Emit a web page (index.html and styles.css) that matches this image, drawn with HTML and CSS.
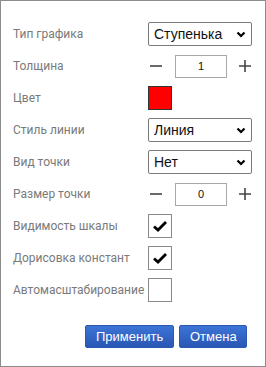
FILE: index.html
```html
<!DOCTYPE html>
<html lang="ru">
<head>
    <meta charset="UTF-8">
    <title>Настройки графика</title>
    <link rel="stylesheet" href="styles.css">
</head>
<body>
    <div class="panel">
        <div class="form-grid">
            <label class="field-label">Тип графика</label>
            <div class="select-wrap">
                <select class="select"><option>Ступенька</option></select>
                <svg class="chevron" width="10" height="7" viewBox="0 0 10 7"><path d="M1.5 1.5 L5 5 L8.5 1.5" fill="none" stroke="#000" stroke-width="2.2"/></svg>
            </div>

            <label class="field-label">Толщина</label>
            <div class="stepper">
                <span class="step-btn">
                    <svg width="14" height="14" viewBox="0 0 14 14"><path d="M1 7 H13" stroke="#444" stroke-width="1.6"/></svg>
                </span>
                <input class="step-value" type="text" value="1">
                <span class="step-btn">
                    <svg width="14" height="14" viewBox="0 0 14 14"><path d="M1 7 H13 M7 1 V13" stroke="#444" stroke-width="1.6"/></svg>
                </span>
            </div>

            <label class="field-label">Цвет</label>
            <div class="color-box"></div>

            <label class="field-label">Стиль линии</label>
            <div class="select-wrap">
                <select class="select"><option>Линия</option></select>
                <svg class="chevron" width="10" height="7" viewBox="0 0 10 7"><path d="M1.5 1.5 L5 5 L8.5 1.5" fill="none" stroke="#000" stroke-width="2.2"/></svg>
            </div>

            <label class="field-label">Вид точки</label>
            <div class="select-wrap">
                <select class="select"><option>Нет</option></select>
                <svg class="chevron" width="10" height="7" viewBox="0 0 10 7"><path d="M1.5 1.5 L5 5 L8.5 1.5" fill="none" stroke="#000" stroke-width="2.2"/></svg>
            </div>

            <label class="field-label">Размер точки</label>
            <div class="stepper">
                <span class="step-btn">
                    <svg width="14" height="14" viewBox="0 0 14 14"><path d="M1 7 H13" stroke="#444" stroke-width="1.6"/></svg>
                </span>
                <input class="step-value" type="text" value="0">
                <span class="step-btn">
                    <svg width="14" height="14" viewBox="0 0 14 14"><path d="M1 7 H13 M7 1 V13" stroke="#444" stroke-width="1.6"/></svg>
                </span>
            </div>

            <label class="field-label">Видимость шкалы</label>
            <div class="check-box">
                <svg width="16" height="14" viewBox="0 0 16 14"><path d="M2 7.5 L6 11 L14 3" fill="none" stroke="#000" stroke-width="2.8"/></svg>
            </div>

            <label class="field-label">Дорисовка констант</label>
            <div class="check-box">
                <svg width="16" height="14" viewBox="0 0 16 14"><path d="M2 7.5 L6 11 L14 3" fill="none" stroke="#000" stroke-width="2.8"/></svg>
            </div>

            <label class="field-label">Автомасштабирование</label>
            <div class="check-box"></div>
        </div>

        <div class="actions">
            <button class="btn">Применить</button>
            <button class="btn">Отмена</button>
        </div>
    </div>
</body>
</html>
```

FILE: styles.css
```css
body {
    margin: 0;
    background-color: white;
}
.panel {
    width: 266px;
    height: 367px;
    box-sizing: border-box;
    border: 1px solid #8c8c8c;
    padding: 21px 0 0 12px;
}
.form-grid {
    display: grid;
    grid-template-columns: 135px 104px;
    grid-auto-rows: 24px;
    row-gap: 8px;
    align-items: center;
}
.field-label {
    font-family: Roboto, "Liberation Sans", sans-serif;
    font-size: 12px;
    color: #7a7a7a;
    white-space: nowrap;
}
.select-wrap {
    position: relative;
    height: 24px;
}
.select {
    appearance: none;
    -webkit-appearance: none;
    width: 104px;
    height: 24px;
    box-sizing: border-box;
    border: 1px solid #7a7a7a;
    border-radius: 2px;
    background: white;
    padding: 0 0 0 5px;
    font-family: "Liberation Sans", Arial, sans-serif;
    font-size: 14px;
    color: #111;
    outline: none;
}
.chevron {
    position: absolute;
    right: 6px;
    top: 9px;
    pointer-events: none;
}
.stepper {
    display: flex;
    align-items: center;
    height: 24px;
}
.step-btn {
    display: flex;
    width: 14px;
    height: 14px;
}
.step-btn:first-child {
    margin: 0 12px 0 1px;
}
.step-btn:last-child {
    margin-left: 11px;
}
.step-value {
    width: 52px;
    height: 23px;
    box-sizing: border-box;
    border: 1px solid #a8a8a8;
    padding: 0;
    text-align: center;
    font-family: "Liberation Sans", Arial, sans-serif;
    font-size: 11px;
    color: #111;
    outline: none;
}
.color-box {
    width: 24px;
    height: 24px;
    box-sizing: border-box;
    background-color: #ff0000;
    border: 1px solid #333;
}
.check-box {
    width: 24px;
    height: 24px;
    box-sizing: border-box;
    border: 1px solid #8a8a8a;
    display: flex;
    align-items: center;
    justify-content: center;
}
.actions {
    display: flex;
    justify-content: flex-end;
    gap: 5px;
    margin-top: 23px;
    padding-right: 18px;
}
.btn {
    height: 23px;
    padding: 0 10px;
    border: 1px solid #2c58b0;
    border-radius: 2px;
    background: linear-gradient(#3c74d6, #2957b4);
    color: white;
    font-family: "Liberation Sans", Arial, sans-serif;
    font-size: 13px;
    cursor: pointer;
}
.btn:first-child {
    width: 89px;
}
.btn:last-child {
    width: 68px;
}
```
